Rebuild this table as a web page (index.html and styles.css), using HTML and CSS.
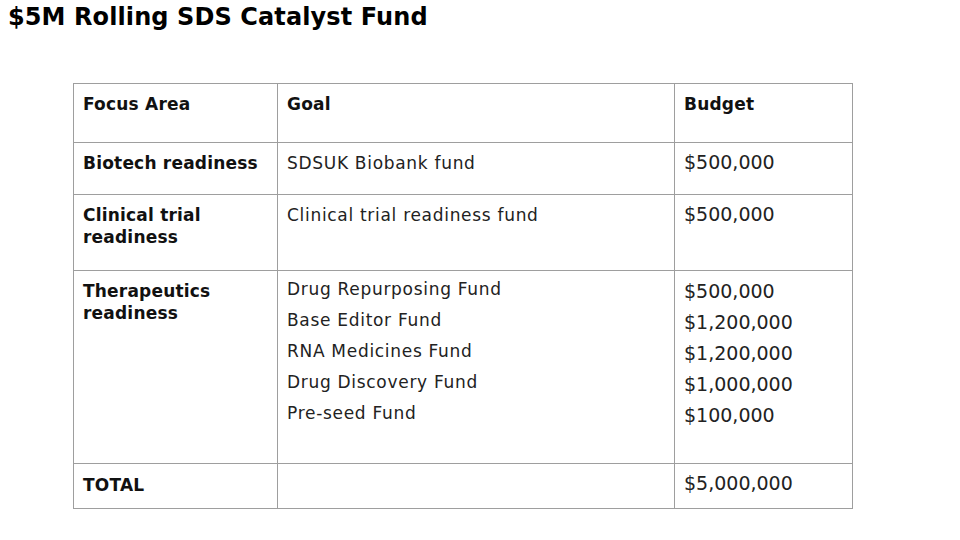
FILE: index.html
```html
<!DOCTYPE html>
<html>
<head>
<meta charset="utf-8">
<link rel="stylesheet" href="styles.css">
</head>
<body>
<h1 class="title">$5M Rolling SDS Catalyst Fund</h1>
<table class="fund">
  <colgroup>
    <col class="c1"><col class="c2"><col class="c3">
  </colgroup>
  <tr class="r-head">
    <th>Focus Area</th><th>Goal</th><th>Budget</th>
  </tr>
  <tr class="r-bio">
    <th>Biotech readiness</th><td>SDSUK Biobank fund</td><td class="num">$500,000</td>
  </tr>
  <tr class="r-clin">
    <th>Clinical trial readiness</th><td>Clinical trial readiness fund</td><td class="num">$500,000</td>
  </tr>
  <tr class="r-ther">
    <th>Therapeutics readiness</th>
    <td>
      <div class="line">Drug Repurposing Fund</div>
      <div class="line">Base Editor Fund</div>
      <div class="line">RNA Medicines Fund</div>
      <div class="line">Drug Discovery Fund</div>
      <div class="line">Pre-seed Fund</div>
    </td>
    <td class="num">
      <div class="line">$500,000</div>
      <div class="line">$1,200,000</div>
      <div class="line">$1,200,000</div>
      <div class="line">$1,000,000</div>
      <div class="line">$100,000</div>
    </td>
  </tr>
  <tr class="r-total">
    <th>TOTAL</th><td></td><td class="num">$5,000,000</td>
  </tr>
</table>
</body>
</html>
```
FILE: styles.css
```css
html, body {
  margin: 0;
  padding: 0;
  background: #ffffff;
}
body {
  font-family: "DejaVu Sans", sans-serif;
  color: #000000;
  width: 960px;
  height: 540px;
  overflow: hidden;
}
.title {
  margin: 0;
  padding: 2px 0 0 8px;
  font-size: 24px;
  font-weight: bold;
  line-height: 30px;
  letter-spacing: 0.1px;
}
.fund {
  margin: 51px 0 0 73px;
  border-collapse: collapse;
  table-layout: fixed;
  width: 779px;
}
.c1 { width: 204px; }
.c2 { width: 397px; }
.c3 { width: 178px; }
.fund th, .fund td {
  border: 1px solid #9e9e9e;
  vertical-align: top;
  text-align: left;
  padding: 9px 9px 0 9px;
  font-size: 17px;
  line-height: 22px;
  color: #111;
}
.fund th { font-weight: bold; letter-spacing: 0.2px; }
.fund td { font-weight: normal; color: #222; letter-spacing: 0.7px; }
.fund td.num { font-size: 19px; padding-top: 8px; letter-spacing: 0; }
.r-head { height: 59px; }
.r-bio { height: 52px; }
.r-clin { height: 76px; }
.r-ther { height: 193px; }
.r-total { height: 45px; }
.r-ther td { padding-top: 3px; }
.r-ther td.num { padding-top: 5px; }
.line { line-height: 31px; }
.r-total th { padding-top: 10px; }
.r-total td.num { padding-top: 8px; }
```
